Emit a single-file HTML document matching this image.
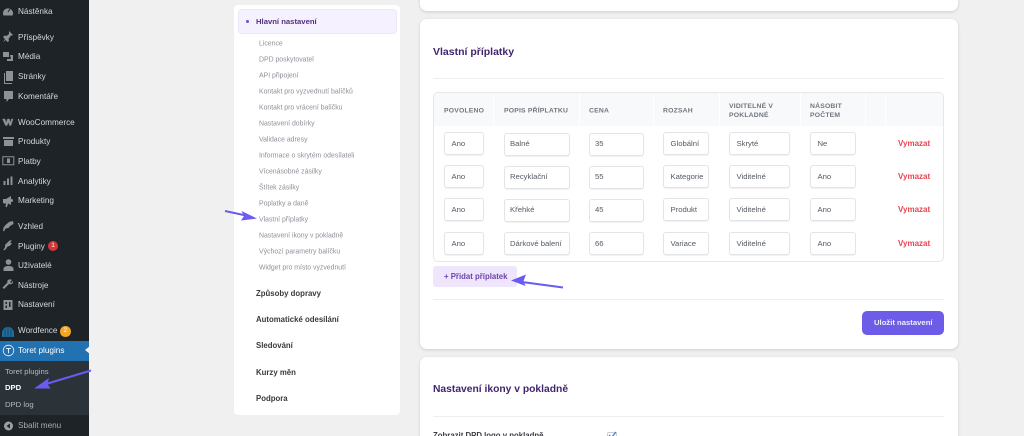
<!DOCTYPE html>
<html lang="cs"><head><meta charset="utf-8"><title>DPD</title>
<style>
html,body{margin:0;padding:0;width:1024px;height:436px;overflow:hidden;background:#f0f0f1}
body{font-family:"Liberation Sans",sans-serif;position:relative}
#w{position:absolute;left:0;top:0;width:1024px;height:436px;overflow:hidden;filter:blur(.35px)}
.a{position:absolute}
.t{position:absolute;white-space:nowrap;transform:translateY(-50%);line-height:1}
.m{left:18px;font-size:8.2px;color:#d5d8da}
.s{left:259px;font-size:6.9px;color:#8d9199;margin-top:1.500px}
.b{left:256px;font-size:7.8px;font-weight:bold;color:#3a3a3f}
.card{position:absolute;left:420px;width:538px;background:#fff;border-radius:7px;box-shadow:0 1px 3px rgba(0,0,0,.14)}
.h{font-size:6.8px;font-weight:bold;color:#71767f;letter-spacing:.2px;line-height:9.2px;transform:translateY(-50%);white-space:nowrap}
.i{position:absolute;box-sizing:border-box;height:23px;background:#fff;border:1px solid #e3e4e8;border-radius:3px;box-shadow:0 1px 1px rgba(0,0,0,.06);font-size:7.7px;color:#555b63;padding-left:6.500px;line-height:21px;white-space:nowrap;overflow:hidden}
.v{font-size:8px;font-weight:bold;color:#ea4450;left:898px}
.sep{position:absolute;top:93px;width:1px;height:33px;background:#fff}
svg{position:absolute;overflow:visible}
</style></head><body><div id="w">

<!-- sidebar -->
<div class="a" style="left:0;top:0;width:89px;height:436px;background:#1d2327"></div>
<div class="a" style="left:0;top:341px;width:89px;height:20px;background:#2271b1"></div>
<div class="a" style="left:0;top:361px;width:89px;height:54px;background:#2c3338"></div>
<div class="a" style="left:85px;top:346px;width:0;height:0;border-top:4.500px solid transparent;border-bottom:4.500px solid transparent;border-right:5px solid #f0f0f1"></div>

<svg width="89" height="436" style="left:0;top:0" fill="#8d9296">
<path d="M3.500 15.500a5 5 0 1 1 9 0z"/><path d="M8 12l2-3" stroke="#1d2327" stroke-width="1"/>
<path d="M9 32l4 4-2.500 1-2 3 .5 2-1.500 1-2-2-2.500 2.500 2-3.500-2-2 1.500-1.500 2 .5 2.500-2z" transform="translate(0,-1)"/>
<path d="M3 52h6v5H3zM10 55h3v6H7v-2h4z"/>
<path d="M6 71h7v10H6zM4 73h1v10h7v1H4z"/>
<path d="M4 91h9v8H9l-2.500 3v-3H4z"/>
<path d="M2.500 119h2.500l1 4 1.500-4h2l1 4 1-4h1.500l-2 6.500h-1.500L8.500 122 7 125.500H5.500z" stroke="#8d9296" stroke-width=".4"/>
<path d="M3 137h11v2H3zM4 140h9v6H4z"/>
<path d="M2.800 156.800h11v8h-11z" fill="none" stroke="#8d9296"/><path d="M7 158.500h3v4.500H7z"/>
<path d="M3.500 181h2v4h-2zM7 178.500h2v6.500H7zM10.500 176.500h2V185h-2z"/>
<path d="M3 199h3l5-3v9l-3-1.500-1 3.500H5.500l.5-3.500H4.500L3 203z"/><circle cx="11.500" cy="200.500" r="1.500"/>
<path d="M9 222l4-1 .5 3-3.500 2-1.500 2-3 .5-1.500 3 -1-1 .5-3 2-2.500z"/>
<path d="M9 241l2-1 .5 1-1.500 1.500 2 1-2.500 2.500-2 .5-1.500 2.500-2 1.500-.5-1 1.500-2 0-2.500z"/>
<circle cx="8.500" cy="262" r="2.800"/><path d="M3.500 271v-2c0-2 2-3 5-3s5 1 5 3v2z"/>
<path d="M12 280l-2 2 1 1 2-2c.5 2-1.500 4-4 3l-5 5-1.500-1.500 5-5c-1-2.500 2-4 4.500-2.500z"/>
<path d="M3.500 300h9v10h-9z"/><path d="M5.500 302h1.500v2H5.500zM9 302h1.500v5H9zM5.500 305.500h1.500v2.500H5.500z" fill="#1d2327"/>
<path d="M2 332c1-3.500 3-5 6-5s5 1.500 6 5v5H2z" fill="#1f6d9e"/>
<path d="M5 329v8M8 327v10M11 329v8" stroke="#153f5b" stroke-width=".8"/>
<circle cx="8.500" cy="350.500" r="5.300" fill="none" stroke="#e8f0f7" stroke-width=".8"/>
<path d="M6.200 348h4.600v1H9v4.200H8V349H6.200z" fill="#e8f0f7"/>
<circle cx="8.500" cy="426" r="4.500" fill="#9aa0a5"/><path d="M10 423.500v5L6.500 426z" fill="#1d2327"/>
</svg>

<div class="t m" style="top:11.500px">Nástěnka</div>
<div class="t m" style="top:37.500px">Příspěvky</div>
<div class="t m" style="top:57px">Média</div>
<div class="t m" style="top:77px">Stránky</div>
<div class="t m" style="top:96.500px">Komentáře</div>
<div class="t m" style="top:122.500px">WooCommerce</div>
<div class="t m" style="top:142px">Produkty</div>
<div class="t m" style="top:161.500px">Platby</div>
<div class="t m" style="top:181.500px">Analytiky</div>
<div class="t m" style="top:201px">Marketing</div>
<div class="t m" style="top:227px">Vzhled</div>
<div class="t m" style="top:246.500px">Pluginy</div>
<div class="t m" style="top:266px">Uživatelé</div>
<div class="t m" style="top:285.500px">Nástroje</div>
<div class="t m" style="top:305px">Nastavení</div>
<div class="t m" style="top:331px">Wordfence</div>
<div class="t m" style="top:350.500px;color:#fff">Toret plugins</div>
<div class="t" style="left:5px;top:372px;font-size:7.700px;color:#b4b9be">Toret plugins</div>
<div class="t" style="left:5px;top:388px;font-size:7.700px;font-weight:bold;color:#fff">DPD</div>
<div class="t" style="left:5px;top:405px;font-size:7.700px;color:#b4b9be">DPD log</div>
<div class="t m" style="top:426px;color:#a7abaf">Sbalit menu</div>
<div class="a" style="left:48px;top:241px;width:10px;height:10px;border-radius:50%;background:#d63638;color:#fff;font-size:6.500px;line-height:10px;text-align:center">1</div>
<div class="a" style="left:60px;top:326px;width:10.500px;height:10.500px;border-radius:50%;background:#f5a623;color:#fff;font-size:6.500px;line-height:10.500px;text-align:center">2</div>

<!-- left panel -->
<div class="a" style="left:234px;top:5px;width:166px;height:410px;background:#fff;border-radius:4px"></div>
<div class="a" style="left:238px;top:9px;width:157px;height:23px;background:#f6f1fe;border:1px solid #ede6fb;border-radius:4px"></div>
<div class="a" style="left:246px;top:20px;width:3px;height:3px;border-radius:50%;background:#6c4fd8"></div>
<div class="t" style="left:256px;top:21.500px;font-size:7.700px;font-weight:bold;color:#51307f">Hlavní nastavení</div>
<div class="t s" style="top:43px">Licence</div>
<div class="t s" style="top:59px">DPD poskytovatel</div>
<div class="t s" style="top:75px">API připojení</div>
<div class="t s" style="top:91px">Kontakt pro vyzvednutí balíčků</div>
<div class="t s" style="top:107px">Kontakt pro vrácení balíčku</div>
<div class="t s" style="top:123px">Nastavení dobírky</div>
<div class="t s" style="top:139.500px">Validace adresy</div>
<div class="t s" style="top:155.500px">Informace o skrytém odesílateli</div>
<div class="t s" style="top:171.500px">Vícenásobné zásilky</div>
<div class="t s" style="top:187.500px">Štítek zásilky</div>
<div class="t s" style="top:203.500px">Poplatky a daně</div>
<div class="t s" style="top:219.500px">Vlastní příplatky</div>
<div class="t s" style="top:235.500px">Nastavení ikony v pokladně</div>
<div class="t s" style="top:251.500px">Výchozí parametry balíčku</div>
<div class="t s" style="top:267.500px">Widget pro místo vyzvednutí</div>
<div class="t b" style="top:293.500px">Způsoby dopravy</div>
<div class="t b" style="top:320px">Automatické odesílání</div>
<div class="t b" style="top:346px">Sledování</div>
<div class="t b" style="top:372.500px">Kurzy měn</div>
<div class="t b" style="top:399px">Podpora</div>

<!-- cards -->
<div class="card" style="top:-20px;height:31px"></div>
<div class="card" style="top:19px;height:330px"></div>
<div class="card" style="top:357px;height:100px"></div>

<div class="t" style="left:433px;top:51.500px;font-size:10.500px;font-weight:bold;color:#42246f">Vlastní příplatky</div>
<div class="a" style="left:433px;top:78px;width:511px;height:1px;background:#eeeef0"></div>

<div class="a" style="left:433px;top:92px;width:509px;height:168px;border:1px solid #e6e7ea;border-radius:5px"></div>
<div class="a" style="left:434px;top:93px;width:509px;height:33px;background:#f8f9fb;border-radius:4px 4px 0 0"></div>
<div class="sep" style="left:493px"></div><div class="sep" style="left:579px"></div><div class="sep" style="left:653px"></div><div class="sep" style="left:719px"></div><div class="sep" style="left:800px"></div><div class="sep" style="left:865px"></div><div class="sep" style="left:885px"></div>

<div class="a h" style="left:444px;top:110.500px">POVOLENO</div>
<div class="a h" style="left:504px;top:110.500px">POPIS PŘÍPLATKU</div>
<div class="a h" style="left:589px;top:110.500px">CENA</div>
<div class="a h" style="left:663px;top:110.500px">ROZSAH</div>
<div class="a h" style="left:729px;top:110.500px">VIDITELNÉ V<br>POKLADNÉ</div>
<div class="a h" style="left:810px;top:110.500px">NÁSOBIT<br>POČTEM</div>

<!-- row 1 -->
<div class="i" style="left:444px;top:132px;width:40px">Ano</div>
<div class="i" style="left:504px;top:133px;width:66px;padding-left:5px;line-height:20px">Balné</div>
<div class="i" style="left:589px;top:133px;width:55px;padding-left:5px;line-height:20px">35</div>
<div class="i" style="left:663px;top:132px;width:46px">Globální</div>
<div class="i" style="left:729px;top:132px;width:61px">Skryté</div>
<div class="i" style="left:810px;top:132px;width:46px">Ne</div>
<div class="t v" style="top:143.500px">Vymazat</div>
<!-- row 2 -->
<div class="i" style="left:444px;top:165px;width:40px">Ano</div>
<div class="i" style="left:504px;top:166px;width:66px;padding-left:5px;line-height:20px">Recyklační</div>
<div class="i" style="left:589px;top:166px;width:55px;padding-left:5px;line-height:20px">55</div>
<div class="i" style="left:663px;top:165px;width:46px">Kategorie</div>
<div class="i" style="left:729px;top:165px;width:61px">Viditelné</div>
<div class="i" style="left:810px;top:165px;width:46px">Ano</div>
<div class="t v" style="top:176.500px">Vymazat</div>
<!-- row 3 -->
<div class="i" style="left:444px;top:198px;width:40px">Ano</div>
<div class="i" style="left:504px;top:199px;width:66px;padding-left:5px;line-height:20px">Křehké</div>
<div class="i" style="left:589px;top:199px;width:55px;padding-left:5px;line-height:20px">45</div>
<div class="i" style="left:663px;top:198px;width:46px">Produkt</div>
<div class="i" style="left:729px;top:198px;width:61px">Viditelné</div>
<div class="i" style="left:810px;top:198px;width:46px">Ano</div>
<div class="t v" style="top:210px">Vymazat</div>
<!-- row 4 -->
<div class="i" style="left:444px;top:232px;width:40px">Ano</div>
<div class="i" style="left:504px;top:232px;width:66px;padding-left:5px;line-height:21px">Dárkové balení</div>
<div class="i" style="left:589px;top:232px;width:55px;padding-left:5px;line-height:21px">66</div>
<div class="i" style="left:663px;top:232px;width:46px">Variace</div>
<div class="i" style="left:729px;top:232px;width:61px">Viditelné</div>
<div class="i" style="left:810px;top:232px;width:46px">Ano</div>
<div class="t v" style="top:243.500px">Vymazat</div>

<div class="a" style="left:433px;top:266px;width:84px;height:21px;background:#efe6fd;border-radius:3px"></div>
<div class="t" style="left:444px;top:277px;font-size:7.800px;font-weight:bold;color:#6d42ad">+ Přidat příplatek</div>
<div class="a" style="left:433px;top:299px;width:511px;height:1px;background:#eeeef0"></div>
<div class="a" style="left:862px;top:311px;width:82px;height:24px;background:#6c5ce7;border-radius:5px"></div>
<div class="t" style="left:874px;top:323px;font-size:7.700px;font-weight:bold;color:#f1eefd">Uložit nastavení</div>

<div class="t" style="left:433px;top:389.500px;font-size:10.300px;font-weight:bold;color:#42246f">Nastavení ikony v pokladně</div>
<div class="a" style="left:433px;top:416px;width:511px;height:1px;background:#eeeef0"></div>
<div class="t" style="left:433px;top:436px;font-size:7.800px;font-weight:bold;color:#3a3a3f">Zobrazit DPD logo v pokladně</div>
<div class="a" style="left:607px;top:432px;width:8px;height:8px;border:1px solid #c9ccd3;border-radius:2px;background:#fff"></div>
<svg width="12" height="10" style="left:607px;top:431px"><path d="M2 4l2.500 2.500L9 1" fill="none" stroke="#4a7fd0" stroke-width="1.300"/></svg>

<!-- arrows -->
<svg width="1024" height="436" style="left:0;top:0" fill="#6a5cf0" stroke="none">
<path d="M91 370.500L46 384" stroke="#6a5cf0" stroke-width="2" fill="none"/>
<path d="M34 388.500l15-10.500-1.500 6 3 4.500z"/>
<path d="M225 211L246 215.500" stroke="#6a5cf0" stroke-width="2" fill="none"/>
<path d="M257 218.500l-15.500-7.500 2.500 5-3 4.500z"/>
<path d="M563 287.500L522 282" stroke="#6a5cf0" stroke-width="2" fill="none"/>
<path d="M511 280.500l15-6-2.500 6.500 2 5z"/>
</svg>
</div></body></html>
